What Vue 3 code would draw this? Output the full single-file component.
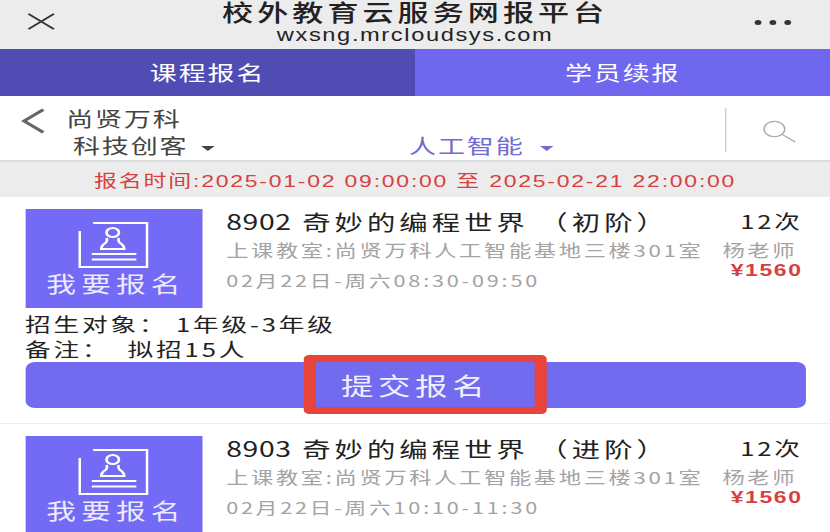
<template>
  <div class="page">
    <header class="top">
      <svg class="close" viewBox="0 0 22 18"><path d="M1 1 L21 17 M21 1 L1 17" /></svg>
      <div class="top-title">
        <h1>校外教育云服务网报平台</h1>
        <p>wxsng.mrcloudsys.com</p>
      </div>
      <div class="dots"><i></i><i></i><i></i></div>
    </header>

    <nav class="tabs">
      <div class="tab active">课程报名</div>
      <div class="tab">学员续报</div>
    </nav>

    <section class="filter">
      <svg class="back" viewBox="0 0 20 26"><path d="M18 1 L3 13 L18 25" /></svg>
      <div class="filter-main">
        <div class="school">尚贤万科</div>
        <div class="cats">
          <div class="cat">科技创客<span class="caret"></span></div>
          <div class="cat on">人工智能<span class="caret"></span></div>
        </div>
      </div>
      <div class="search">
        <svg viewBox="0 0 28 24"><circle cx="11" cy="9.5" r="8" /><path d="M17 15 L27 23" /></svg>
      </div>
    </section>

    <div class="time">报名时间:2025-01-02 09:00:00 至 2025-02-21 22:00:00</div>

    <article v-for="c in courses" :key="c.code" class="course">
      <div class="course-top">
        <div class="signup">
          <svg viewBox="0 0 52 46">
            <path class="frame" d="M11 1 H51 V45 H1 V9" />
            <ellipse class="line" cx="25.5" cy="10.5" rx="4.6" ry="4.6" />
            <path class="line" d="M21 16 Q22 20 19 22 Q17 24 17 27 H34 Q34 24 32 22 Q29 20 30 16" />
            <path class="line" d="M10 32 H43 M10 37.5 H43" />
          </svg>
          <span>我要报名</span>
        </div>
        <div class="info">
          <div class="row title"><span><span class="code">{{ c.code }}</span> 奇妙的编程世界 （{{ c.level }}）</span><span class="count">12次</span></div>
          <div class="row room"><span>上课教室:尚贤万科人工智能基地三楼301室</span><span class="teacher">杨老师</span></div>
          <div class="row when"><span>{{ c.time }}</span><span class="price">¥1560</span></div>
        </div>
      </div>
      <template v-if="c.detail">
        <div class="detail">
          <p>招生对象： 1年级-3年级</p>
          <p>备注：&nbsp; 拟招15人</p>
        </div>
        <div class="submit">
          <span>提交报名</span>
          <div class="mark"></div>
        </div>
      </template>
    </article>
  </div>
</template>

<script setup>
const courses = [
  { code: '8902', level: '初阶', time: '02月22日-周六08:30-09:50', detail: true },
  { code: '8903', level: '进阶', time: '02月22日-周六10:10-11:30', detail: false }
]
</script>

<style>
html, body {
  margin: 0;
  overflow: hidden;
  background: #fff;
}
</style>

<style scoped>
/* the capture is a phone screen stretched sideways, so the whole page is scaled */
.page {
  width: 615px;
  height: 532px;
  overflow: hidden;
  transform: scaleX(1.35);
  transform-origin: 0 0;
  background: #fff;
  font-family: "Noto Sans CJK SC", "Liberation Sans", sans-serif;
}

.top {
  height: 49px;
  background: #ececec;
  display: grid;
  grid-template-columns: 1fr auto 1fr;
  align-items: center;
  padding: 0 24.5px;
}

.close {
  width: 21px;
  height: 17px;
  margin: 0 0 6px -4.5px;
}

.close path {
  fill: none;
  stroke: #333;
  stroke-width: 1.8;
}

.top-title {
  text-align: center;
  color: #222;
  align-self: start;
  padding-top: 1px;
}

.top-title h1 {
  margin: 0;
  font-family: "Liberation Sans", "Noto Sans CJK SC", sans-serif;
  font-size: 23px;
  line-height: 24px;
  font-weight: 500;
  letter-spacing: 3px;
}

.top-title p {
  margin: 1px 0 0;
  font-family: "Liberation Sans", sans-serif;
  font-size: 17.5px;
  line-height: 18px;
  letter-spacing: 1.2px;
}

.dots {
  display: flex;
  justify-self: end;
  gap: 6px;
  margin: 0 5px 4px 0;
}

.dots i {
  width: 5px;
  height: 5px;
  border-radius: 50%;
  background: #333;
}

.tabs {
  display: flex;
  height: 47px;
}

.tab {
  flex: 1;
  display: flex;
  align-items: center;
  justify-content: center;
  background: #6f68ee;
  color: #fff;
  font-size: 20px;
  letter-spacing: 1.4px;
}

.tab.active {
  background: #514cb3;
}

.filter {
  height: 66px;
  display: flex;
  box-sizing: border-box;
  padding: 12px 0 8px 15px;
  border-bottom: 2px solid #ddd;
}

.back {
  width: 19px;
  height: 26px;
  flex: none;
}

.back path {
  fill: none;
  stroke: #666;
  stroke-width: 3;
}

.filter-main {
  flex: 1;
  min-width: 0;
  margin-left: 15px;
  color: #444;
  font-size: 20px;
  letter-spacing: 1.4px;
}

.school {
  line-height: 22px;
}

.cats {
  display: flex;
  margin-top: 5px;
}

.cat {
  width: 249px;
  flex: none;
  line-height: 22px;
}

.cat:first-child {
  margin-left: 5px;
}

.cat.on {
  color: #716bd3;
}

.cat.on .caret {
  margin-left: 11px;
}

.caret {
  display: inline-block;
  margin-left: 9px;
  vertical-align: middle;
  border: 5px solid transparent;
  border-top-color: currentColor;
  border-bottom-width: 0;
}

.search {
  width: 78px;
  border-left: 1px solid #ccc;
  flex: none;
  box-sizing: border-box;
}

.search svg {
  display: block;
  width: 27px;
  height: 23px;
  margin: 12px 0 0 25px;
  fill: none;
  stroke: #aaa;
  stroke-width: 1.2;
}

.time {
  height: 35px;
  box-sizing: border-box;
  padding-top: 4px;
  line-height: 31px;
  background: #ececec;
  color: #d8403f;
  text-align: center;
  font-family: "Liberation Sans", "Noto Sans CJK SC", sans-serif;
  font-size: 17px;
  letter-spacing: 1.32px;
}

.course {
  padding: 12px 18.5px 15px;
  border-bottom: 1px solid #eee;
}

.course-top {
  display: flex;
  gap: 18px;
}

.signup {
  width: 131px;
  height: 99px;
  flex: none;
  background: #736bf5;
  color: #eeeafc;
  display: flex;
  flex-direction: column;
  align-items: center;
  padding-top: 13px;
  box-sizing: border-box;
}

.signup svg {
  width: 52px;
  height: 46px;
  fill: none;
  stroke: #fff;
}

.signup .frame {
  stroke-width: 2;
}

.signup .line {
  stroke-width: 2;
}

.signup span {
  font-size: 22px;
  line-height: 26px;
  letter-spacing: 3.8px;
  margin-top: 1px;
  margin-right: -3.8px;
}

.info {
  flex: 1;
  min-width: 0;
}

.row {
  display: flex;
  justify-content: space-between;
}

.title {
  font-size: 21px;
  line-height: 24px;
  color: #222;
  letter-spacing: 3px;
  padding-right: 2px;
}

.code {
  letter-spacing: 0.5px;
}

.count {
  font-size: 19px;
  letter-spacing: 2px;
}

.room {
  margin-top: 6px;
  font-size: 16.5px;
  line-height: 22px;
  color: #a3a3a3;
  letter-spacing: 1.95px;
  padding-right: 6px;
}

.when {
  margin-top: -1px;
  font-size: 16px;
  line-height: 22px;
  color: #a3a3a3;
  letter-spacing: 2.1px;
}

.when span:first-child {
  margin-top: 9px;
}

.price {
  color: #d8403f;
  font-family: "Liberation Sans", sans-serif;
  font-size: 17px;
  font-weight: 700;
  letter-spacing: 1.2px;
  padding-right: 2px;
}

.detail {
  margin-top: 3px;
  font-size: 19px;
  line-height: 25px;
  color: #222;
  letter-spacing: 2.1px;
}

.detail p {
  margin: 0;
}

.submit {
  position: relative;
  height: 46px;
  margin-top: 1px;
  background: #726bf0;
  border-radius: 7px;
  color: #f1effd;
  font-size: 24px;
  letter-spacing: 3.5px;
  text-align: center;
  line-height: 46px;
}

.mark {
  position: absolute;
  left: 206.5px;
  top: -7px;
  width: 180px;
  height: 59px;
  box-sizing: border-box;
  border-style: solid;
  border-color: #e8443a;
  border-width: 7px 9px;
  border-radius: 4px;
}
</style>
